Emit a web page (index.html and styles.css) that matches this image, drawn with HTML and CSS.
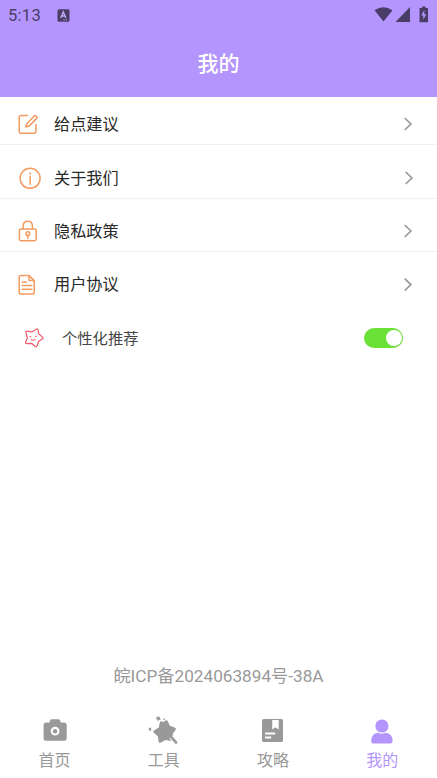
FILE: index.html
```html
<!DOCTYPE html>
<html lang="zh-CN">
<head>
<meta charset="utf-8">
<meta name="viewport" content="width=device-width">
<title>我的</title>
<link rel="stylesheet" href="styles.css">
</head>
<body>
<div class="app">
  <header class="header">
    <div class="status">
      <span class="time">5:13</span>
      <svg class="badge" width="13" height="13" viewBox="0 0 13 13"><rect x=".5" y=".3" width="12" height="12.4" rx="1.5" fill="#493d68"/><path d="M3.7 9 6.3 3 8.9 9M4.8 7h3M6.5 10.8h1M8.8 10.8h1" fill="none" stroke="#c5b0f8" stroke-width="1.3"/></svg>
      <svg class="signals" width="56" height="18" viewBox="0 0 56 18">
        <g fill="#493d68"><path d="M.5 4.3Q9.5-1.9 18.5 4.3L9.5 15.6Z"/><path d="M36 1v15H21.5Z"/><path d="M46 2h2V.5h3.5V2h2.5v14.2h-8.5V2Z"/></g>
        <path d="m50.3 4-3 5.5h2v4.2l3-5.5h-2Z" fill="#b395fd"/>
      </svg>
    </div>
    <h1 class="title">我的</h1>
  </header>
  <main class="list">
    <div class="row row-first">
      <svg class="icon" width="24" height="24" viewBox="0 0 24 24"><path d="M11.5 3.6H5.2Q3.2 3.6 3.2 5.6V19.2Q3.2 21.2 5.2 21.2H17.9Q19.9 21.2 19.9 19.2V12.4M10.7 12 18.3 4.1Q19.2 3.2 20.1 4L20.9 4.8Q21.5 5.4 20.7 6.4L13.1 14.1 9.9 14.9Z"/></svg>
      <span class="label">给点建议</span>
      <svg class="arrow" width="10" height="16" viewBox="0 0 10 16"><path d="m1.7 2 6.2 6-6.2 6"/></svg>
    </div>
    <div class="row">
      <svg class="icon" width="24" height="24" viewBox="0 0 24 24"><circle cx="14.1" cy="12.3" r="10"/><path d="M14.1 10.3v8"/><circle class="fill" cx="14.1" cy="7.6" r="1"/></svg>
      <span class="label">关于我们</span>
      <svg class="arrow arrow-shift" width="10" height="16" viewBox="0 0 10 16"><path d="m1.7 2 6.2 6-6.2 6"/></svg>
    </div>
    <div class="row">
      <svg class="icon" width="24" height="24" viewBox="0 0 24 24"><rect x="3.4" y="10" width="16.8" height="11.7" rx="1.6"/><path d="M7.2 9.8V6.7Q7.4 2.3 11.8 2.3T16.4 6.7V9.8M11.8 16.6v2.8"/><circle cx="11.8" cy="14.6" r="1.9"/></svg>
      <span class="label">隐私政策</span>
      <svg class="arrow" width="10" height="16" viewBox="0 0 10 16"><path d="m1.7 2 6.2 6-6.2 6"/></svg>
    </div>
    <div class="row row-last">
      <svg class="icon" width="24" height="24" viewBox="0 0 24 24"><path d="M13.1 2.6H5Q3.2 2.6 3.2 4.4V19.3Q3.2 21.1 5 21.1H16.4Q18.2 21.1 18.2 19.3V7.6ZM13 2.8V7.6H18M6.2 9h4.2M6.2 12.6h9.6M6.2 16.2h9.6"/></svg>
      <span class="label">用户协议</span>
      <svg class="arrow" width="10" height="16" viewBox="0 0 10 16"><path d="m1.7 1.6 6.2 6-6.2 6"/></svg>
    </div>
    <div class="row row-toggle">
      <svg class="star" width="22" height="22" viewBox="0 0 22 22"><path d="M13.2 2.3Q15 1.3 15.1 3L15.6 6.8 19.5 10.1Q20.4 11.2 19.2 12L15.8 14.2 14.1 18.8Q13.2 20.4 11.8 19.3L8.5 16.3 4 16.6Q2 16.5 2.7 14.8L4.4 11 2.9 5.6Q2.4 3.8 4.4 4.1L9 4.9ZM8.3 12.6q1.8 1.4 3.8-.2"/><path d="M7 9.6h.6M12.5 9.3h.7"/></svg>
      <span class="label label-small">个性化推荐</span>
      <span class="switch"><span class="knob"></span></span>
    </div>
  </main>
  <p class="record">皖ICP备2024063894号-38A</p>
  <nav class="tabs">
    <div class="tab">
      <svg width="32" height="32" viewBox="0 0 32 32"><path fill-rule="evenodd" d="M11 5.5 12 4.3H20L21.2 5.5 21.6 7.5H25Q27.7 7.6 27.7 10V23.2Q27.7 25.7 25 25.7H7.2Q4.6 25.7 4.6 23.2V10Q4.6 7.6 7.2 7.5H10.6ZM16.1 11.8A4.4 4.4 0 1 0 16.1 20.6A4.4 4.4 0 1 0 16.1 11.8Z"/><circle cx="16.1" cy="16.2" r="2.2"/></svg>
      <span>首页</span>
    </div>
    <div class="tab">
      <svg width="32" height="32" viewBox="0 0 32 32"><path d="M17.4 5.6Q18.9 4.6 19.8 6.3L21.8 10.8 26.6 12.4Q28.8 13.5 27.4 15L24.6 19.2 25.1 24Q24.8 26.6 22.8 26L17.5 25 13 27.6Q10.9 28.4 10.5 26.3L9.8 21.3 6 17.9Q4.6 16.1 6.7 15L10.8 12.6 11.8 7.4Q12.5 5.5 14.2 6.5L15.6 7Z"/><path class="handle" d="m23.4 22.2 4.6 5.2"/><path class="handle-fill" d="m24 22.8 4 4.6"/><path d="M8.5 1.3 10.3 2.1 12.3 1.2 11.6 3.1 13 4.5 11.2 4.9 9.8 6.3 9.1 4.2 7.4 3.7 8.8 2.9ZM15.3 3.5h1.5V5h-1.5ZM.7 12.7 2.1 13 3.3 12.3 3 14.1 3.6 15.5 2.1 15.4.8 16.1 1.1 14.5Z"/></svg>
      <span>工具</span>
    </div>
    <div class="tab">
      <svg width="32" height="32" viewBox="0 0 32 32"><rect x="5" y="4.1" width="21" height="23" rx="1.7"/><path fill="#fff" d="M15.2 5H21.7V14.6L18.4 12.2 15.2 14.6ZM8.1 17.6H18.2V19.4H8.1ZM8.1 21.6H14.2V23.4H8.1Z"/></svg>
      <span>攻略</span>
    </div>
    <div class="tab active">
      <svg width="32" height="32" viewBox="0 0 32 32"><circle cx="15.9" cy="11" r="6.6"/><path d="M5.2 26.3Q5.2 18.2 12.2 17.7 15.9 19.8 19.6 17.7 26.6 18.2 26.6 26.3 26.6 28.5 24.5 28.5H7.3Q5.2 28.5 5.2 26.3Z"/></svg>
      <span>我的</span>
    </div>
  </nav>
</div>
</body>
</html>
```
FILE: styles.css
```css
* { box-sizing: border-box; }
body {
  margin: 0;
  background: #fff;
  font-family: Roboto, "Noto Sans CJK SC", sans-serif;
}
.app {
  height: 778px;
  display: flex;
  flex-direction: column;
  overflow: hidden;
}
.header {
  height: 97px;
  background: #b395fd;
}
.status {
  height: 30px;
  display: flex;
  align-items: center;
  padding: 0 7px 0 8px;
  color: #493d68;
}
.time {
  width: 49px;
  font-size: 16.5px;
  letter-spacing: .3px;
}
.signals { margin-left: auto; }
.title {
  margin: 0;
  height: 68px;
  line-height: 68px;
  text-align: center;
  color: #fff;
  font-size: 21px;
  font-weight: 500;
}
.row {
  height: 53.5px;
  padding: 13px 24px 0 16px;
  display: flex;
  align-items: center;
  border-bottom: 1.5px solid #f1f1f1;
}
.row-first { height: 48px; padding-top: 7px; }
.row-last { border-bottom-color: transparent; }
.row-toggle { border: 0; padding: 12px 34px 0 23px; }
.icon {
  overflow: visible;
  fill: none;
  stroke: #f39b60;
  stroke-width: 1.5;
  stroke-linejoin: round;
  stroke-linecap: round;
}
.icon .fill { fill: #f39b60; stroke: none; }
.label {
  margin-left: 14px;
  padding-top: 2px;
  line-height: 24px;
  font-size: 16.2px;
  color: #282828;
}
.row-last .label { padding-top: 1px; }
.label-small { margin-left: 17px; font-size: 15.3px; color: #444; }
.arrow {
  margin-left: auto;
  fill: none;
  stroke: #999;
  stroke-width: 1.7;
}
.arrow-shift { margin-right: -1px; }
.star {
  fill: none;
  stroke: #f25b68;
  stroke-width: 1.2;
  stroke-linejoin: round;
  stroke-linecap: round;
}
.switch {
  margin-left: auto;
  width: 39px;
  height: 20px;
  padding: 2px 1.5px 2px 2px;
  display: flex;
  justify-content: flex-end;
  border-radius: 10px;
  background: #6be037;
}
.knob {
  width: 16px;
  height: 16px;
  border-radius: 50%;
  background: #fff;
}
.record {
  margin: auto 0 27px;
  line-height: 24px;
  text-align: center;
  font-size: 17.2px;
  color: #999;
}
.tabs {
  height: 63px;
  display: grid;
  grid-template-columns: repeat(4, 1fr);
}
.tab {
  display: flex;
  flex-direction: column;
  align-items: center;
  gap: 2px;
  font-size: 16px;
  line-height: 24px;
  color: #999;
}
.tab svg { fill: currentColor; }
.handle { stroke: #fff; stroke-width: 5; }
.handle-fill { stroke: currentColor; stroke-width: 2.8; stroke-linecap: round; }
.active { color: #b395fd; }
```
